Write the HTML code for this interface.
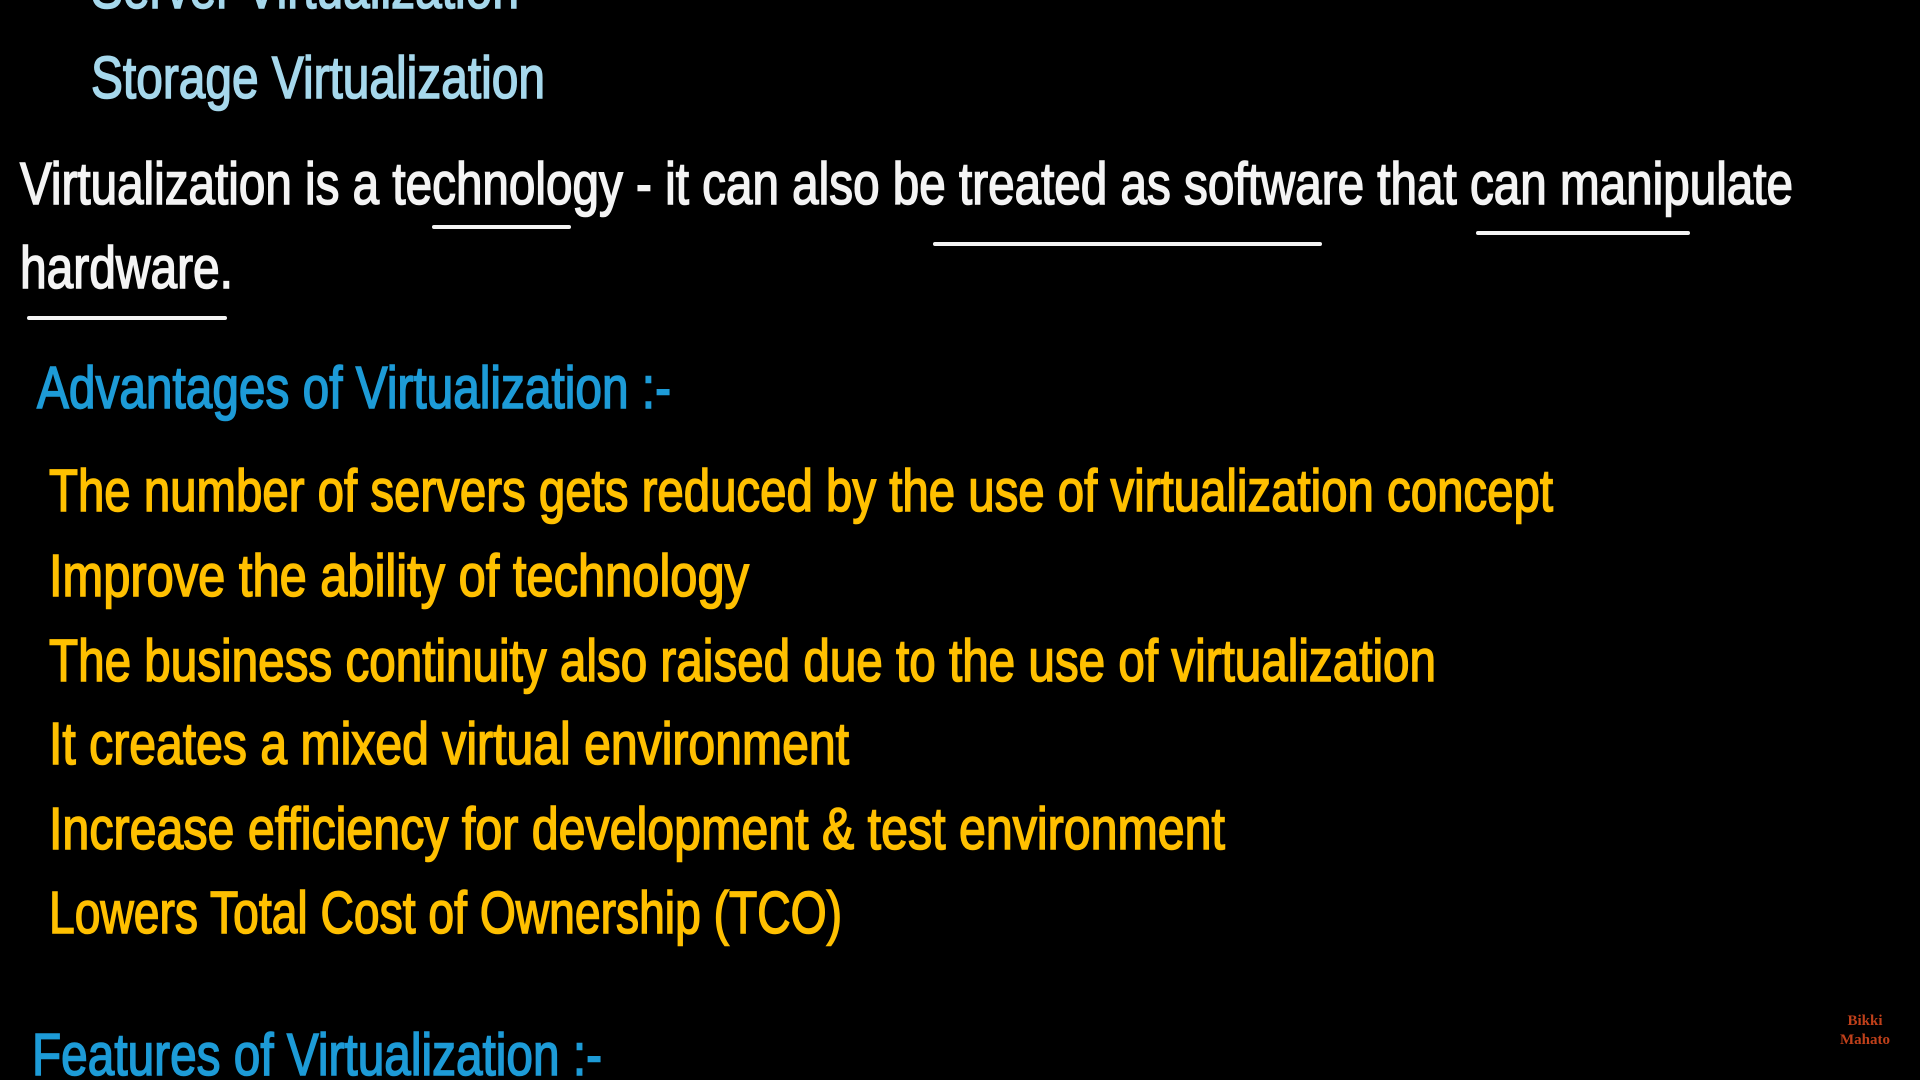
<!DOCTYPE html>
<html><head><style>
html,body{margin:0;padding:0;background:#000;width:1920px;height:1080px;overflow:hidden}
svg{display:block}
text{font-family:"Liberation Sans",sans-serif;font-size:59px;stroke-width:1.6px;paint-order:stroke}
</style></head><body>
<svg width="1920" height="1080" viewBox="0 0 1920 1080">
<rect width="1920" height="1080" fill="#000"/>
<text x="91" y="8" fill="#a6d8ec" stroke="#a6d8ec" textLength="428" lengthAdjust="spacingAndGlyphs">Server Virtualization</text>
<text x="91" y="98" fill="#a6d8ec" stroke="#a6d8ec" textLength="454" lengthAdjust="spacingAndGlyphs">Storage Virtualization</text>
<text x="20" y="204" fill="#f4f4f4" stroke="#f4f4f4" textLength="1773" lengthAdjust="spacingAndGlyphs">Virtualization is a technology - it can also be treated as software that can manipulate</text>
<text x="20" y="288" fill="#f4f4f4" stroke="#f4f4f4" textLength="213" lengthAdjust="spacingAndGlyphs">hardware.</text>
<g fill="#f4f4f4">
<rect x="432" y="225" width="139" height="4" rx="2"/>
<rect x="933" y="242" width="389" height="4" rx="2"/>
<rect x="1476" y="231" width="214" height="4" rx="2"/>
<rect x="27" y="316" width="200" height="4" rx="2"/>
</g>
<text x="37" y="408" fill="#1d9bd7" stroke="#1d9bd7" textLength="634" lengthAdjust="spacingAndGlyphs">Advantages of Virtualization :-</text>
<g fill="#ffc000" stroke="#ffc000">
<text x="49" y="511" textLength="1504" lengthAdjust="spacingAndGlyphs">The number of servers gets reduced by the use of virtualization concept</text>
<text x="49" y="596" textLength="700" lengthAdjust="spacingAndGlyphs">Improve the ability of technology</text>
<text x="49" y="681" textLength="1387" lengthAdjust="spacingAndGlyphs">The business continuity also raised due to the use of virtualization</text>
<text x="49" y="764" textLength="800" lengthAdjust="spacingAndGlyphs">It creates a mixed virtual environment</text>
<text x="49" y="849" textLength="1176" lengthAdjust="spacingAndGlyphs">Increase efficiency for development &amp; test environment</text>
<text x="49" y="933" textLength="793" lengthAdjust="spacingAndGlyphs">Lowers Total Cost of Ownership (TCO)</text>
</g>
<text x="32" y="1075" fill="#1d9bd7" stroke="#1d9bd7" textLength="570" lengthAdjust="spacingAndGlyphs">Features of Virtualization :-</text>
<text x="1865" y="1025" fill="#c0401a" text-anchor="middle" style="font-family:'Liberation Serif',serif;font-size:15px;font-weight:bold;stroke:none">Bikki</text>
<text x="1865" y="1044" fill="#c0401a" text-anchor="middle" style="font-family:'Liberation Serif',serif;font-size:15px;font-weight:bold;stroke:none">Mahato</text>
</svg>
</body></html>
